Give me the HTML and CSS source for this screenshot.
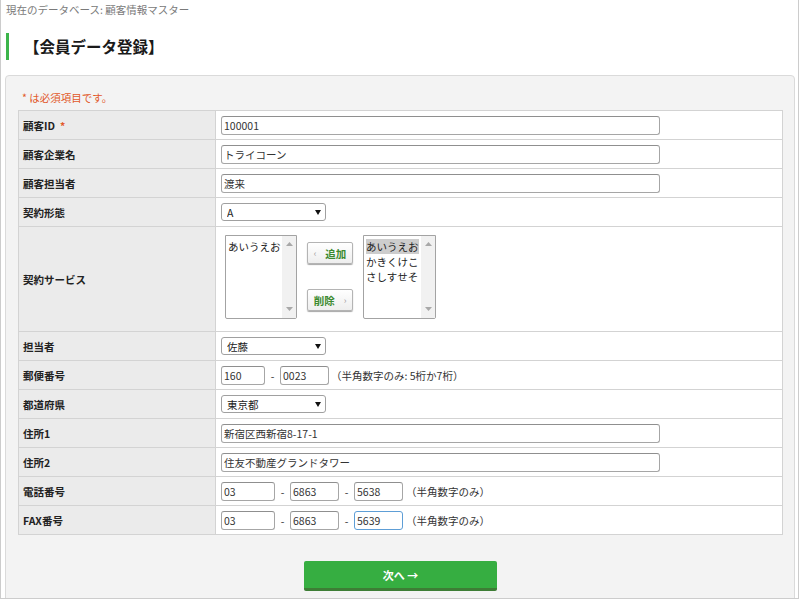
FILE: index.html
```html
<!DOCTYPE html>
<html lang="ja">
<head>
  <meta charset="UTF-8" />
  <meta name="viewport" content="width=device-width, initial-scale=1.0" />
  <title>会員データ登録</title>
  <link rel="stylesheet" href="styles.css">
</head>
<body>
  <div class="frame">
    <p class="crumb">現在のデータベース: 顧客情報マスター</p>
    <h1 class="title">【会員データ登録】</h1>

    <div class="panel">
      <p class="req-note">* は必須項目です。</p>

      <div class="form">
        <div class="row">
          <div class="label">顧客ID<span class="req">*</span></div>
          <div class="field"><input class="input long" type="text" value="100001"></div>
        </div>
        <div class="row">
          <div class="label">顧客企業名</div>
          <div class="field"><input class="input long" type="text" value="トライコーン"></div>
        </div>
        <div class="row">
          <div class="label">顧客担当者</div>
          <div class="field"><input class="input long" type="text" value="渡来"></div>
        </div>
        <div class="row">
          <div class="label">契約形態</div>
          <div class="field">
            <span class="select-wrap">
              <select class="select"><option>A</option><option>B</option></select>
            </span>
          </div>
        </div>
        <div class="row service">
          <div class="label">契約サービス</div>
          <div class="field service-field">
            <div class="listbox">
              <ul class="options">
                <li>あいうえお</li>
              </ul>
              <div class="scrollbar">
                <svg width="7" height="4" viewBox="0 0 7 4"><path d="M3.5 0 7 4H0z" fill="#a8a8a8"/></svg>
                <svg width="7" height="4" viewBox="0 0 7 4"><path d="M0 0h7L3.5 4z" fill="#a8a8a8"/></svg>
              </div>
            </div>
            <div class="move-buttons">
              <button class="move" type="button"><span class="chev">‹</span>追加</button>
              <button class="move" type="button">削除<span class="chev">›</span></button>
            </div>
            <div class="listbox wide">
              <ul class="options">
                <li class="picked">あいうえお</li>
                <li>かきくけこ</li>
                <li>さしすせそ</li>
              </ul>
              <div class="scrollbar">
                <svg width="7" height="4" viewBox="0 0 7 4"><path d="M3.5 0 7 4H0z" fill="#a8a8a8"/></svg>
                <svg width="7" height="4" viewBox="0 0 7 4"><path d="M0 0h7L3.5 4z" fill="#a8a8a8"/></svg>
              </div>
            </div>
          </div>
        </div>
        <div class="row">
          <div class="label">担当者</div>
          <div class="field">
            <span class="select-wrap">
              <select class="select"><option>佐藤</option><option>鈴木</option></select>
            </span>
          </div>
        </div>
        <div class="row">
          <div class="label">郵便番号</div>
          <div class="field">
            <input class="input zip1" type="text" value="160">
            <span class="dash">-</span>
            <input class="input zip2" type="text" value="0023">
            <span class="hint">（半角数字のみ: 5桁か7桁）</span>
          </div>
        </div>
        <div class="row">
          <div class="label">都道府県</div>
          <div class="field">
            <span class="select-wrap">
              <select class="select"><option>東京都</option><option>大阪府</option></select>
            </span>
          </div>
        </div>
        <div class="row">
          <div class="label">住所1</div>
          <div class="field"><input class="input long" type="text" value="新宿区西新宿8-17-1"></div>
        </div>
        <div class="row">
          <div class="label">住所2</div>
          <div class="field"><input class="input long" type="text" value="住友不動産グランドタワー"></div>
        </div>
        <div class="row">
          <div class="label">電話番号</div>
          <div class="field">
            <input class="input tel1" type="text" value="03">
            <span class="dash">-</span>
            <input class="input tel" type="text" value="6863">
            <span class="dash">-</span>
            <input class="input tel" type="text" value="5638">
            <span class="hint tel-hint">（半角数字のみ）</span>
          </div>
        </div>
        <div class="row">
          <div class="label">FAX番号</div>
          <div class="field">
            <input class="input tel1" type="text" value="03">
            <span class="dash">-</span>
            <input class="input tel" type="text" value="6863">
            <span class="dash">-</span>
            <input class="input tel is-focused" type="text" value="5639">
            <span class="hint tel-hint">（半角数字のみ）</span>
          </div>
        </div>
      </div>

      <div class="actions">
        <button class="next" type="button">次へ →</button>
      </div>
    </div>
  </div>
</body>
</html>
```

FILE: styles.css
```css
:root {
  --green: #36ae41;
  --line: #d3d3d3;
  --label-bg: #ebebeb;
  --panel-bg: #f3f3f3;
  --text: #222222;
  --accent: #e2582a;
}

* {
  box-sizing: border-box;
  margin: 0;
  padding: 0;
  font-family: 'Noto Sans CJK JP', 'Noto Sans', sans-serif;
}

body {
  background: #ffffff;
  color: var(--text);
  font-size: 10.5px;
}

.frame {
  width: 799px;
  height: 599px;
  overflow: hidden;
  border-left: 1px solid #cccccc;
  border-right: 1px solid #cccccc;
  border-bottom: 1px solid #cccccc;
}

.crumb {
  color: #7a7a7a;
  line-height: 20px;
  padding-left: 5px;
}

.title {
  margin: 13px 0 0 5px;
  border-left: 3px solid #3cb54a;
  padding-left: 15px;
  font-size: 15.5px;
  line-height: 27px;
  font-weight: 700;
  color: #1a1a1a;
}

.panel {
  margin: 15px 3px 0 4px;
  background: var(--panel-bg);
  border: 1px solid #dadada;
  border-radius: 4px;
  padding: 12px 11px 20px 12px;
}

.req-note {
  color: var(--accent);
  line-height: 20px;
  padding-left: 4px;
  margin-bottom: 2px;
}

.req {
  color: var(--accent);
  margin-left: 5px;
}

.form {
  background: #ffffff;
  border: 1px solid var(--line);
  border-bottom: none;
  width: 765px;
}

.row {
  display: grid;
  grid-template-columns: 197px 1fr;
  height: 29px;
  border-bottom: 1px solid var(--line);
}

.row.service {
  height: 105px;
}

.label {
  background: var(--label-bg);
  border-right: 1px solid var(--line);
  display: flex;
  align-items: center;
  padding-left: 4px;
  font-weight: 700;
}

.field {
  display: flex;
  align-items: center;
  padding-left: 5px;
}

.input {
  height: 19px;
  border: 1px solid #a6a6a6;
  border-top-color: #8f8f8f;
  border-radius: 3px;
  padding: 0 2px;
  font-size: 10.5px;
  color: #333333;
  background: #ffffff;
  outline: none;
}

.input.long { width: 439px; }
.input.zip1 { width: 44px; }
.input.zip2 { width: 49px; }
.input.tel1 { width: 54px; }
.input.tel { width: 49px; }

.input.is-focused {
  border-color: #5e9ed6;
}

.dash {
  width: 15px;
  text-align: center;
  color: #333333;
}

.hint {
  margin-left: 2px;
  color: #333333;
}

.tel-hint {
  margin-left: 3px;
}

.select-wrap {
  position: relative;
  display: inline-block;
}

.select-wrap::after {
  content: "";
  position: absolute;
  right: 5px;
  top: 7px;
  border-left: 3px solid transparent;
  border-right: 3px solid transparent;
  border-top: 5px solid #111111;
  pointer-events: none;
}

.select {
  appearance: none;
  -webkit-appearance: none;
  width: 105px;
  height: 18px;
  border: 1px solid #a0a0a0;
  border-radius: 3px;
  background: #ffffff;
  padding: 0 14px 0 5px;
  font-size: 10.5px;
  color: #222222;
}

.service-field {
  align-items: flex-start;
  padding-top: 8px;
  padding-left: 9px;
}

.listbox {
  display: flex;
  width: 72px;
  height: 84px;
  border: 1px solid #a3a3a3;
  border-radius: 0 0 2px 2px;
  background: #ffffff;
}

.listbox.wide {
  width: 73px;
}

.options {
  list-style: none;
  flex: 1;
  padding: 3px 2px;
  overflow: hidden;
}

.options li {
  line-height: 15px;
  font-size: 10.5px;
  white-space: nowrap;
  color: #222222;
}

.options li.picked {
  background: #cdcdcd;
}

.scrollbar {
  width: 14px;
  background: #f1f1f1;
  display: flex;
  flex-direction: column;
  justify-content: space-between;
  align-items: center;
  padding: 6px 0 7px;
}

.scrollbar svg {
  display: block;
}

.move-buttons {
  display: flex;
  flex-direction: column;
  gap: 25px;
  padding-top: 7px;
  margin: 0 10px;
}

.move {
  width: 46px;
  height: 22px;
  border: 1px solid #b4b4b4;
  border-radius: 2px;
  background: linear-gradient(#ffffff, #eeeeee);
  box-shadow: 0 1px 1px rgba(0, 0, 0, 0.35);
  color: #3b8a2f;
  font-weight: 700;
  font-size: 10.5px;
  display: flex;
  align-items: center;
  justify-content: center;
  gap: 9px;
  cursor: pointer;
}

.chev {
  color: #a0a0a0;
  font-weight: 400;
  font-size: 9px;
}

.actions {
  display: flex;
  justify-content: center;
  margin-top: 26px;
}

.next {
  width: 193px;
  height: 30px;
  border: none;
  border-bottom: 3px solid #3d7d35;
  border-radius: 2px;
  background: var(--green);
  color: #ffffff;
  font-weight: 700;
  font-size: 11px;
  cursor: pointer;
}

.next:hover {
  background: #2f9f3a;
}
```
